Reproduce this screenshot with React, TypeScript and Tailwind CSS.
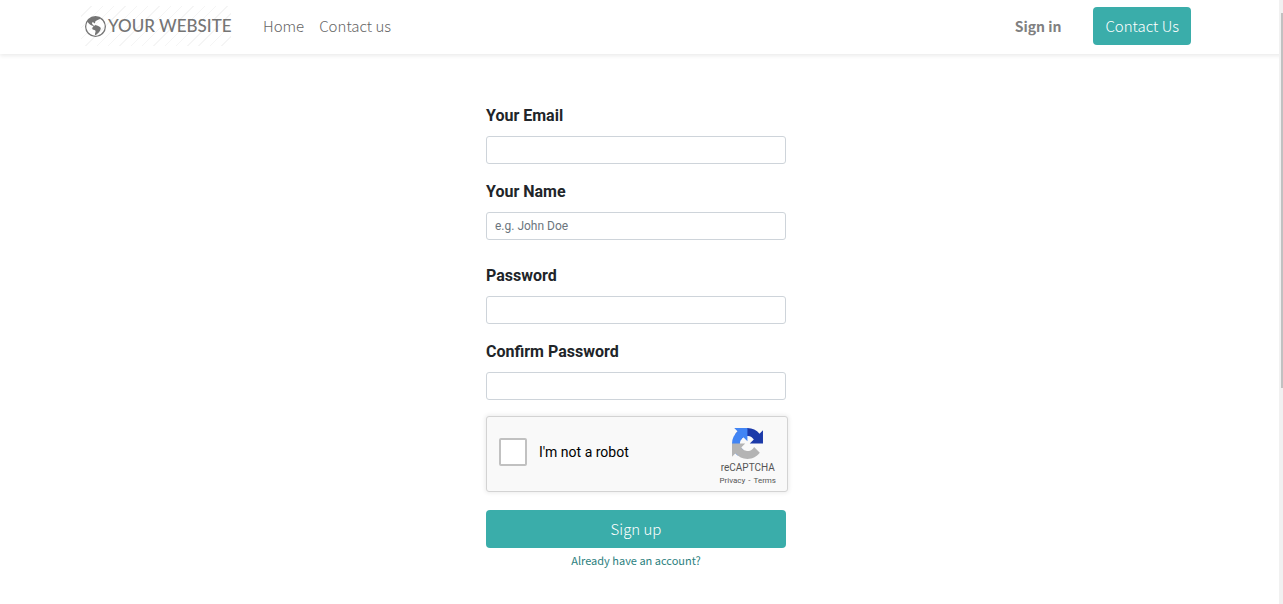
import type { InputHTMLAttributes } from "react";
import { BsGlobeAmericas } from "react-icons/bs";

type FieldProps = InputHTMLAttributes<HTMLInputElement> & { id: string; label: string };

function Field({ id, label, ...input }: FieldProps) {
  return (
    <div className="flex flex-col gap-2">
      <label htmlFor={id} className="text-base leading-6 font-bold">
        {label}
      </label>
      <input
        id={id}
        className="h-7 w-full rounded-[3px] border border-[#ced4da] bg-white px-2 text-xs text-[#495057] placeholder:text-[#6c757d]"
        {...input}
      />
    </div>
  );
}

function Brand() {
  return (
    <a
      href="#"
      className="flex h-10 w-[150px] shrink-0 items-center gap-0.5 bg-[repeating-linear-gradient(135deg,#fff_0_7px,#f5f5f5_7px_8px)] pl-1 font-['Lato',sans-serif] text-[17px] font-medium whitespace-nowrap text-[#757575]"
    >
      <BsGlobeAmericas className="size-[21px] shrink-0" />
      YOUR WEBSITE
    </a>
  );
}

function Header() {
  return (
    <header className="bg-white pr-[11px] font-['Noto_Sans_CJK_SC',sans-serif] text-[15px] shadow-[0_2px_4px_rgba(0,0,0,0.08)]">
      <div className="mx-auto flex h-[54px] max-w-[1140px] items-center px-[15px] pb-0.5 text-[#808080]">
        <Brand />
        <nav className="ml-8 flex gap-[15px] font-light text-[#666]">
          <a href="#">Home</a>
          <a href="#">Contact us</a>
        </nav>
        <div className="ml-auto flex items-center gap-8">
          <a href="#" className="text-sm font-bold">
            Sign in
          </a>
          <a href="#" className="rounded bg-[#3aadaa] px-3 py-[7px] leading-6 font-light text-white">
            Contact Us
          </a>
        </div>
      </div>
    </header>
  );
}

function RecaptchaLogo() {
  return (
    <svg viewBox="0 0 64 64" className="size-[31px]" aria-hidden="true">
      <path
        fill="#1c3aa9"
        d="M64 31.955l-.033-1.37V4.687l-7.16 7.16C50.948 4.674 42.033.093 32.05.093c-10.4 0-19.622 4.96-25.458 12.64l11.736 11.86a15.55 15.55 0 0 1 4.754-5.334c2.05-1.6 4.952-2.906 8.968-2.906.485 0 .86.057 1.135.163 4.976.393 9.288 3.14 11.828 7.124l-8.307 8.307L64 31.953"
      />
      <path
        fill="#4285f4"
        d="M31.862.094l-1.37.033H4.594l7.16 7.16C4.58 13.147 0 22.06 0 32.046c0 10.4 4.96 19.622 12.64 25.458L24.5 45.768a15.55 15.55 0 0 1-5.334-4.754c-1.6-2.05-2.906-4.952-2.906-8.968 0-.485.057-.86.163-1.135.393-4.976 3.14-9.288 7.124-11.828l8.307 8.307L31.86.095"
      />
      <path
        fill="#b4b4b4"
        d="M.001 32.045l.033 1.37v25.898l7.16-7.16c5.86 7.173 14.774 11.754 24.76 11.754 10.4 0 19.622-4.96 25.458-12.64l-11.736-11.86a15.55 15.55 0 0 1-4.754 5.334c-2.05 1.6-4.952 2.906-8.968 2.906-.485 0-.86-.057-1.135-.163-4.976-.393-9.288-3.14-11.828-7.124l8.307-8.307c-10.522.04-22.4.066-27.295-.005"
      />
    </svg>
  );
}

function Recaptcha() {
  return (
    <div className="mt-4 flex h-[76px] w-[302px] items-center rounded-[3px] border border-[#d3d3d3] bg-[#f9f9f9] pr-[11px] pl-3 shadow-[0_0_4px_1px_rgba(0,0,0,0.08)]">
      <label className="flex items-center gap-3 pb-1 text-sm text-black">
        <input
          type="checkbox"
          className="size-7 appearance-none rounded-[2px] border-2 border-[#c1c1c1] bg-white"
        />
        I'm not a robot
      </label>
      <div className="ml-auto flex flex-col items-center pt-1 text-[#555]">
        <RecaptchaLogo />
        <span className="text-[10px] leading-[18px]">reCAPTCHA</span>
        <div className="flex gap-[3px] text-[8px] leading-2">
          <a href="#">Privacy</a>
          <span>-</span>
          <a href="#">Terms</a>
        </div>
      </div>
    </div>
  );
}

export default function App() {
  return (
    <div className="min-h-screen bg-white font-['Roboto',sans-serif] text-[#212529]">
      <Header />
      <main className="pt-[50px] pr-[11px] pb-8">
        <form className="mx-auto flex w-[300px] flex-col">
          <div className="flex flex-col gap-6">
            <div className="flex flex-col gap-4">
              <Field id="email" label="Your Email" type="email" />
              <Field id="name" label="Your Name" type="text" placeholder="e.g. John Doe" />
            </div>
            <div className="flex flex-col gap-4">
              <Field id="password" label="Password" type="password" />
              <Field id="confirm" label="Confirm Password" type="password" />
            </div>
          </div>
          <Recaptcha />
          <button
            type="submit"
            className="mt-[18px] h-[38px] rounded bg-[#3aadaa] font-['Noto_Sans_CJK_SC',sans-serif] text-[15px] font-light text-white"
          >
            Sign up
          </button>
          <a
            href="#"
            className="mt-1 self-center font-['Noto_Sans_CJK_SC',sans-serif] text-[11px] leading-4 text-[#2b807e]"
          >
            Already have an account?
          </a>
        </form>
      </main>
      <div className="fixed inset-y-0 right-0 w-1 bg-[#f1f1f1] pt-[13px] pl-0.5" aria-hidden="true">
        <div className="h-[375px] bg-[#c1c1c1]" />
      </div>
    </div>
  );
}
